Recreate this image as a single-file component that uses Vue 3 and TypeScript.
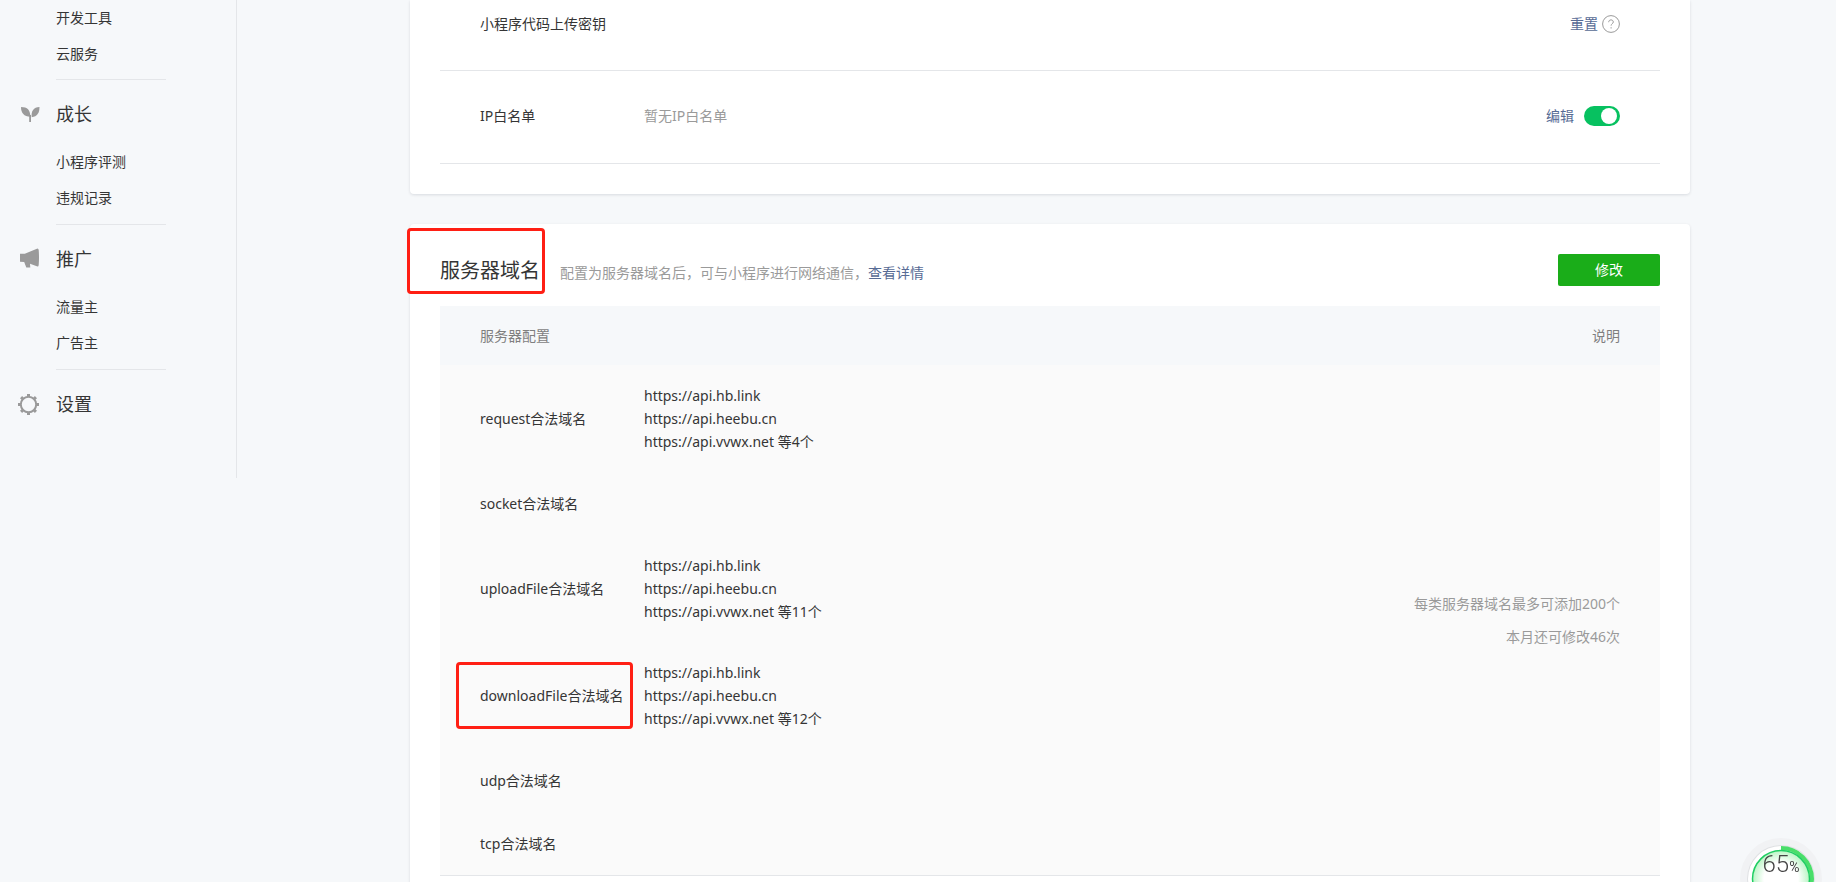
<script setup lang="ts">
import { ref } from 'vue'

interface NavGroup {
  title?: string
  icon?: 'sprout' | 'horn' | 'gear'
  items: string[]
}

interface DomainRow {
  name: string
  hosts: string[]
  marked?: boolean
}

const groups: NavGroup[] = [
  { items: ['开发工具', '云服务'] },
  { title: '成长', icon: 'sprout', items: ['小程序评测', '违规记录'] },
  { title: '推广', icon: 'horn', items: ['流量主', '广告主'] },
  { title: '设置', icon: 'gear', items: [] },
]

const domains: DomainRow[] = [
  { name: 'request合法域名', hosts: ['https://api.hb.link', 'https://api.heebu.cn', 'https://api.vvwx.net 等4个'] },
  { name: 'socket合法域名', hosts: [] },
  { name: 'uploadFile合法域名', hosts: ['https://api.hb.link', 'https://api.heebu.cn', 'https://api.vvwx.net 等11个'] },
  { name: 'downloadFile合法域名', hosts: ['https://api.hb.link', 'https://api.heebu.cn', 'https://api.vvwx.net 等12个'], marked: true },
  { name: 'udp合法域名', hosts: [] },
  { name: 'tcp合法域名', hosts: [] },
]

const whitelistOn = ref(true)
</script>

<template>
  <div class="page">
    <nav class="sidebar">
      <section v-for="(group, i) in groups" :key="i" class="group">
        <h2 v-if="group.title" class="group-title">
          <svg v-if="group.icon === 'sprout'" class="nav-icon" viewBox="0 0 24 24" aria-hidden="true">
            <path d="M5 5c6.500 0 9.300 3 9.300 9.800C8 14.500 5 11 5 5z" />
            <path d="M23.500 5c0 6-2.300 9.500-7.800 10.200C15 9 17.500 5.300 23.500 5z" />
            <path d="M13.200 13h1.800v7h-1.800z" />
          </svg>
          <svg v-else-if="group.icon === 'horn'" class="nav-icon" viewBox="0 0 24 24" aria-hidden="true">
            <path d="M4 6.800h4.800L21.500 1.500q1 0 1.200 1.500.6 7.500 0 15-.1 1.500-1.200 1.500L14 16.800l.3 3.700h-4L8.200 15 4 14.800z" />
          </svg>
          <svg v-else class="nav-icon" viewBox="0 0 24 24" aria-hidden="true">
            <circle cx="12.500" cy="12.500" r="7.700" fill="none" stroke="#9a9a9a" stroke-width="2" />
            <path v-for="n in 8" :key="n" d="M11 2h3v3h-3z" :transform="`rotate(${n * 45} 12.500 12.500)`" />
          </svg>
          {{ group.title }}
        </h2>
        <ul v-if="group.items.length" class="group-list">
          <li v-for="item in group.items" :key="item"><a href="#">{{ item }}</a></li>
        </ul>
      </section>
    </nav>

    <main class="main">
      <section class="card">
        <div class="row">
          <span class="row-name">小程序代码上传密钥</span>
          <span class="row-actions">
            <a class="link" href="#">重置</a>
            <button class="help" type="button" aria-label="帮助">
              <svg viewBox="0 0 18 18" aria-hidden="true">
                <circle cx="9" cy="9" r="8.400" />
                <path d="M6.700 7.200c0-1.500 1-2.300 2.300-2.300s2.300.8 2.300 2.100c0 1.600-2.200 1.800-2.200 3.600M9.100 12.200v1.300" />
              </svg>
            </button>
          </span>
        </div>
        <div class="row">
          <span class="row-name">IP白名单</span>
          <span class="row-value">暂无IP白名单</span>
          <span class="row-actions spaced">
            <a class="link" href="#">编辑</a>
            <input v-model="whitelistOn" class="switch" type="checkbox" aria-label="IP白名单" />
          </span>
        </div>
      </section>

      <section class="card domains">
        <header class="card-head">
          <h1 class="title marked-title">服务器域名</h1>
          <p class="desc">配置为服务器域名后，可与小程序进行网络通信，<a class="link" href="#">查看详情</a></p>
          <button class="primary" type="button">修改</button>
        </header>
        <table class="table">
          <thead>
            <tr>
              <th class="name" scope="col" colspan="2">服务器配置</th>
              <th class="note" scope="col">说明</th>
            </tr>
          </thead>
          <tbody>
            <tr v-for="(row, i) in domains" :key="row.name">
              <th class="name" scope="row"><span :class="{ marked: row.marked }">{{ row.name }}</span></th>
              <td class="hosts">
                <div v-for="host in row.hosts" :key="host">{{ host }}</div>
              </td>
              <td v-if="i === 0" class="note" :rowspan="domains.length">
                <p>每类服务器域名最多可添加200个</p>
                <p>本月还可修改46次</p>
              </td>
            </tr>
          </tbody>
        </table>
      </section>
    </main>

    <aside class="gauge">
      <svg class="gauge-ring" viewBox="0 0 84 84" aria-hidden="true">
        <defs>
          <radialGradient id="gauge-face">
            <stop offset="0.600" stop-color="#ffffff" />
            <stop offset="1" stop-color="#b9f5c4" />
          </radialGradient>
        </defs>
        <circle cx="42" cy="42" r="41" fill="#f1f2f4" />
        <circle cx="42" cy="42" r="34" fill="#dfe1e3" />
        <circle cx="42" cy="42" r="33" fill="#ffffff" />
        <circle
          cx="42" cy="42" r="31" fill="none" stroke="#4ade6a" stroke-width="4"
          pathLength="100" stroke-dasharray="65 35" transform="rotate(-90 42 42)"
        />
        <circle cx="42" cy="42" r="28.500" fill="url(#gauge-face)" stroke="#1fce63" stroke-width="1.500" />
      </svg>
      <span class="gauge-text">65<small>%</small></span>
    </aside>
  </div>
</template>

<style>
body {
  background: #f6f8fa;
}
</style>

<style scoped>
.page {
  display: flex;
  align-items: flex-start;
  height: 100vh;
  overflow: hidden;
  color: #353535;
  font: 14px/22px "Noto Sans", "Noto Sans CJK SC", sans-serif;
}

h1,
h2,
p,
ul {
  margin: 0;
  padding: 0;
  font-weight: 400;
}

a {
  color: inherit;
  text-decoration: none;
}

.sidebar {
  flex: none;
  box-sizing: border-box;
  width: 237px;
  padding: 0 70px 54px 56px;
  border-right: 1px solid #e4e6e9;
}

.group + .group {
  padding-top: 14px;
  border-top: 1px solid #e4e6e9;
}

.group-title {
  display: flex;
  align-items: center;
  height: 40px;
  margin: 0 0 10px -40px;
  gap: 16px;
  font-size: 18px;
}

.group:last-child .group-title {
  margin-bottom: 0;
}

.nav-icon {
  width: 24px;
  height: 24px;
  fill: #9a9a9a;
}

.group-list {
  padding-bottom: 8px;
  line-height: 36px;
  list-style: none;
}

.group:first-child .group-list {
  padding-bottom: 7px;
}

.main {
  flex: 1;
  min-width: 0;
  padding: 0 146px 30px 173px;
}

.card {
  padding: 0 30px 30px;
  background: #fff;
  border-radius: 0 0 4px 4px;
  box-shadow: 0 1px 3px rgba(0, 20, 40, 0.12);
}

.domains {
  margin-top: 30px;
  padding-top: 30px;
  border-radius: 4px;
}

.row {
  display: flex;
  align-items: center;
  height: 20px;
  padding: 35px 40px 37px;
  border-bottom: 1px solid #e4e6e9;
}

.row:first-child {
  padding: 14px 40px 36px;
}

.row-name {
  width: 164px;
}

.row-value {
  color: #9a9a9a;
}

.row-actions {
  display: flex;
  align-items: center;
  gap: 4px;
  margin-left: auto;
}

.spaced {
  gap: 10px;
}

.link {
  color: #576b95;
}

.help {
  width: 18px;
  height: 18px;
  padding: 0;
  border: 0;
  background: none;
}

.help svg {
  display: block;
  fill: none;
  stroke: #9a9a9a;
}

.switch {
  display: flex;
  justify-content: flex-end;
  box-sizing: border-box;
  width: 36px;
  height: 20px;
  margin: 0;
  padding: 2px 3px;
  appearance: none;
  background: #07c160;
  border-radius: 10px;
}

.switch::before {
  content: "";
  width: 16px;
  height: 16px;
  background: #fff;
  border-radius: 50%;
}

.switch:not(:checked) {
  justify-content: flex-start;
  background: #d9d9d9;
}

.card-head {
  display: flex;
  align-items: baseline;
  height: 52px;
}

.title {
  font-size: 20px;
  line-height: 34px;
}

.desc {
  margin-left: 20px;
  color: #9a9a9a;
}

.primary {
  width: 102px;
  height: 32px;
  margin-left: auto;
  padding: 0;
  align-self: flex-start;
  color: #fff;
  font: inherit;
  background: #1aad19;
  border: 0;
  border-radius: 2px;
}

.table {
  width: 100%;
  border-collapse: collapse;
  background: #fafafa;
  border-bottom: 1px solid #e4e6e9;
  line-height: 23px;
}

.table th,
.table td {
  padding: 19px 0;
  font-weight: 400;
  text-align: left;
}

.table tbody th {
  height: 25px;
}

.table thead th {
  padding: 18px 0;
  color: #7f7f7f;
  background: #f6f8fa;
}

.table .name {
  width: 164px;
  padding-left: 40px;
}

.table .note {
  padding-right: 40px;
  text-align: right;
}

.table td.note {
  color: #9a9a9a;
}

.note p + p {
  margin-top: 10px;
}

/* Red callout frames laid over the highlighted labels */
.marked-title,
.marked {
  position: relative;
}

.marked-title::after,
.marked::after {
  content: "";
  position: absolute;
  box-sizing: border-box;
  border: 3px solid #ff1f14;
  border-radius: 4px;
}

.marked-title::after {
  inset: -26px -5px -6px -33px;
}

.marked::after {
  inset: -24px -10px -24px -24px;
}

.gauge {
  position: fixed;
  right: 13px;
  bottom: -39px;
  width: 84px;
  height: 84px;
}

.gauge-ring {
  display: block;
}

.gauge-text {
  position: absolute;
  top: 13px;
  left: 0;
  width: 100%;
  color: #444;
  font: 300 24px/28px Roboto, sans-serif;
  text-align: center;
}

.gauge-text small {
  font-size: 14px;
  font-weight: 400;
}
</style>
